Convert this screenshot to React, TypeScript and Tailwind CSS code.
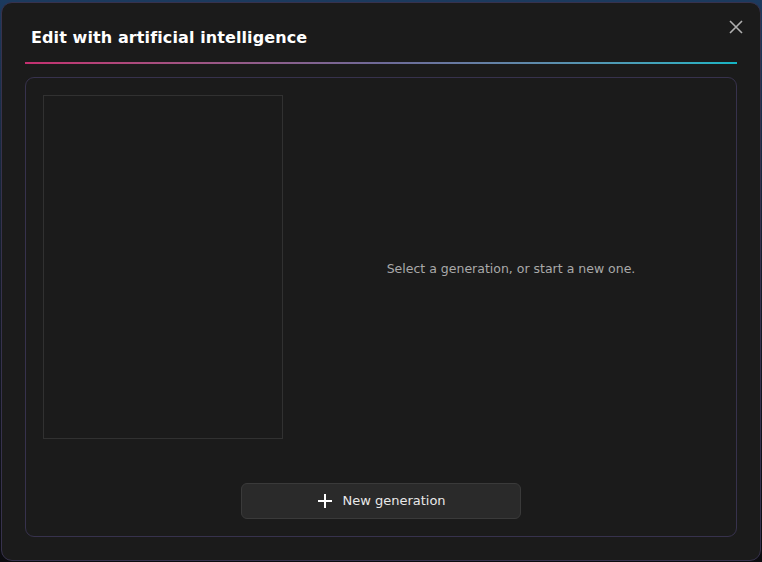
import React from "react";

export default function App() {
  return (
    <div className="w-[762px] h-[562px] bg-gradient-to-b from-[#1c3a5e] via-[#141c28] to-[#0c0c10] pt-[2px] px-[1px] pb-[1px]" style={{ fontFamily: '"DejaVu Sans", Verdana, sans-serif' }}>
      <div className="relative h-[559px] w-[760px] rounded-[11px] border border-[#37324d] bg-[#1b1b1b] flex flex-col">
        <button className="absolute right-[16px] top-[16px] w-[16px] h-[16px] flex items-center justify-center text-[#b0b0b0]">
          <svg width="14" height="14" viewBox="0 0 14 14" fill="none" stroke="currentColor" strokeWidth="1.6">
            <path d="M1 1 L13 13 M13 1 L1 13" />
          </svg>
        </button>
        <div className="pl-[29px] pt-[23px] h-[59px] text-[16px] font-bold text-white tracking-[0.1px]">
          Edit with artificial intelligence
        </div>
        <div className="mx-[23px] h-[2px] bg-gradient-to-r from-[#c42f70] via-[#6e6a98] to-[#12b4c4]" />
        <div className="mx-[23px] mt-[13px] h-[460px] rounded-[9px] border border-[#37324d] p-[17px] flex flex-col">
          <div className="flex flex-1">
            <div className="w-[240px] h-[344px] border border-[#313131]" />
            <div className="flex-1 flex items-center justify-center text-[12.5px] text-[#a9a9a9] pb-[40px] pl-[20px]">
              Select a generation, or start a new one.
            </div>
          </div>
          <div className="flex justify-center">
            <button className="w-[280px] h-[36px] rounded-[6px] border border-[#3a3a3a] bg-[#2a2a2a] flex items-center justify-center gap-[8px] text-[13px] text-[#e8e8e8]">
              <svg width="18" height="18" viewBox="0 0 18 18" fill="none" stroke="white" strokeWidth="2">
                <path d="M9 2 V16 M2 9 H16" />
              </svg>
              New generation
            </button>
          </div>
        </div>
      </div>
    </div>
  );
}
